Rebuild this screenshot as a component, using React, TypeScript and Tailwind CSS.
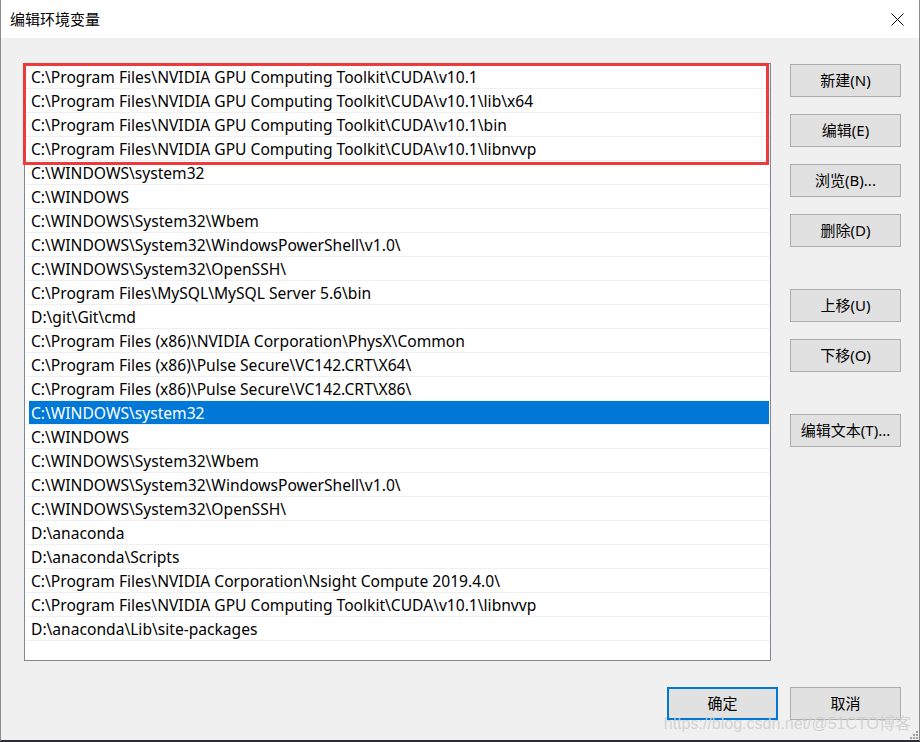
import React from "react";

const base = "C:\\Program Files\\NVIDIA GPU Computing Toolkit\\CUDA\\v10.1";

const paths: string[] = [
  base,
  base + "\\lib\\x64",
  base + "\\bin",
  base + "\\libnvvp",
  "C:\\WINDOWS\\system32",
  "C:\\WINDOWS",
  "C:\\WINDOWS\\System32\\Wbem",
  "C:\\WINDOWS\\System32\\WindowsPowerShell\\v1.0\\",
  "C:\\WINDOWS\\System32\\OpenSSH\\",
  "C:\\Program Files\\MySQL\\MySQL Server 5.6\\bin",
  "D:\\git\\Git\\cmd",
  "C:\\Program Files (x86)\\NVIDIA Corporation\\PhysX\\Common",
  "C:\\Program Files (x86)\\Pulse Secure\\VC142.CRT\\X64\\",
  "C:\\Program Files (x86)\\Pulse Secure\\VC142.CRT\\X86\\",
  "C:\\WINDOWS\\system32",
  "C:\\WINDOWS",
  "C:\\WINDOWS\\System32\\Wbem",
  "C:\\WINDOWS\\System32\\WindowsPowerShell\\v1.0\\",
  "C:\\WINDOWS\\System32\\OpenSSH\\",
  "D:\\anaconda",
  "D:\\anaconda\\Scripts",
  "C:\\Program Files\\NVIDIA Corporation\\Nsight Compute 2019.4.0\\",
  base + "\\libnvvp",
  "D:\\anaconda\\Lib\\site-packages",
];

const SELECTED = 14;

const font = "font-['Noto_Sans','Noto_Sans_CJK_SC',sans-serif]";

const Btn: React.FC<{ label: string; primary?: boolean; className?: string }> = ({ label, primary, className }) => (
  <div
    className={`w-[111px] h-[33px] flex items-center justify-center bg-[#e1e1e1] text-[15px] text-black ${
      primary ? "border-2 border-[#0078d7]" : "border border-[#adadad]"
    } ${className ?? ""}`}
  >
    {label}
  </div>
);

export default function App() {
  return (
    <div className={`w-[920px] h-[742px] flex flex-col border-l border-r border-[#8a8a8a] border-b-2 border-b-[#2a2d35] bg-[#f0f0f0] ${font}`}>
      {/* title bar */}
      <div className="h-[38px] bg-white flex items-center justify-between pl-[9px] pr-[15px]">
        <span className="text-[15px] text-black">编辑环境变量</span>
        <svg width="13" height="13" viewBox="0 0 13 13">
          <path d="M0.5 0.5 L12.5 12.5 M12.5 0.5 L0.5 12.5" stroke="#000" strokeWidth="1" />
        </svg>
      </div>

      <div className="relative flex-1 flex flex-col pl-[23px]">
        <div className="flex mt-[25px]">
          {/* list */}
          <div className="relative w-[747px] h-[598px] bg-white border border-[#828790] pt-[1px]">
            {paths.map((p, i) => (
              <div key={i} className="h-[24px] border-b border-[#f0f0f0] pl-[4px] pr-[1px]">
                <div
                  className={`h-[23px] flex items-center pl-[2px] pt-[2px] text-[15.6px] whitespace-nowrap ${
                    i === SELECTED ? "bg-[#0078d7] text-white" : "text-black"
                  }`}
                >
                  {p}
                </div>
              </div>
            ))}
            {/* annotation box */}
            <div className="absolute left-[-2px] top-[-1px] w-[746px] h-[102px] border-[3px] border-[#ee3a3a]" />
          </div>

          {/* side buttons */}
          <div className="ml-[19px] mt-[1px] flex flex-col">
            <Btn label="新建(N)" />
            <Btn label="编辑(E)" className="mt-[17px]" />
            <Btn label="浏览(B)..." className="mt-[17px]" />
            <Btn label="删除(D)" className="mt-[17px]" />
            <Btn label="上移(U)" className="mt-[42px]" />
            <Btn label="下移(O)" className="mt-[17px]" />
            <Btn label="编辑文本(T)..." className="mt-[42px]" />
          </div>
        </div>

        {/* bottom buttons */}
        <div className="flex justify-end gap-[12px] mt-[26px] pr-[18px]">
          <Btn label="确定" primary />
          <Btn label="取消" />
        </div>

        {/* watermark */}
        <div className="absolute right-[8px] bottom-[4px] text-[16px] text-[#d0d0d0] opacity-90 whitespace-nowrap font-['Liberation_Sans','Noto_Sans_CJK_SC',sans-serif]">
          https://blog.csdn.net/@51CTO博客
        </div>
        <div className="absolute right-0 bottom-0 grid grid-cols-3 gap-[1px] p-[1px]">
          <span />
          <span />
          <span className="w-[2px] h-[2px] bg-[#a0a0a0]" />
          <span />
          <span className="w-[2px] h-[2px] bg-[#a0a0a0]" />
          <span className="w-[2px] h-[2px] bg-[#a0a0a0]" />
          <span className="w-[2px] h-[2px] bg-[#a0a0a0]" />
          <span className="w-[2px] h-[2px] bg-[#a0a0a0]" />
          <span className="w-[2px] h-[2px] bg-[#a0a0a0]" />
        </div>
      </div>
    </div>
  );
}
